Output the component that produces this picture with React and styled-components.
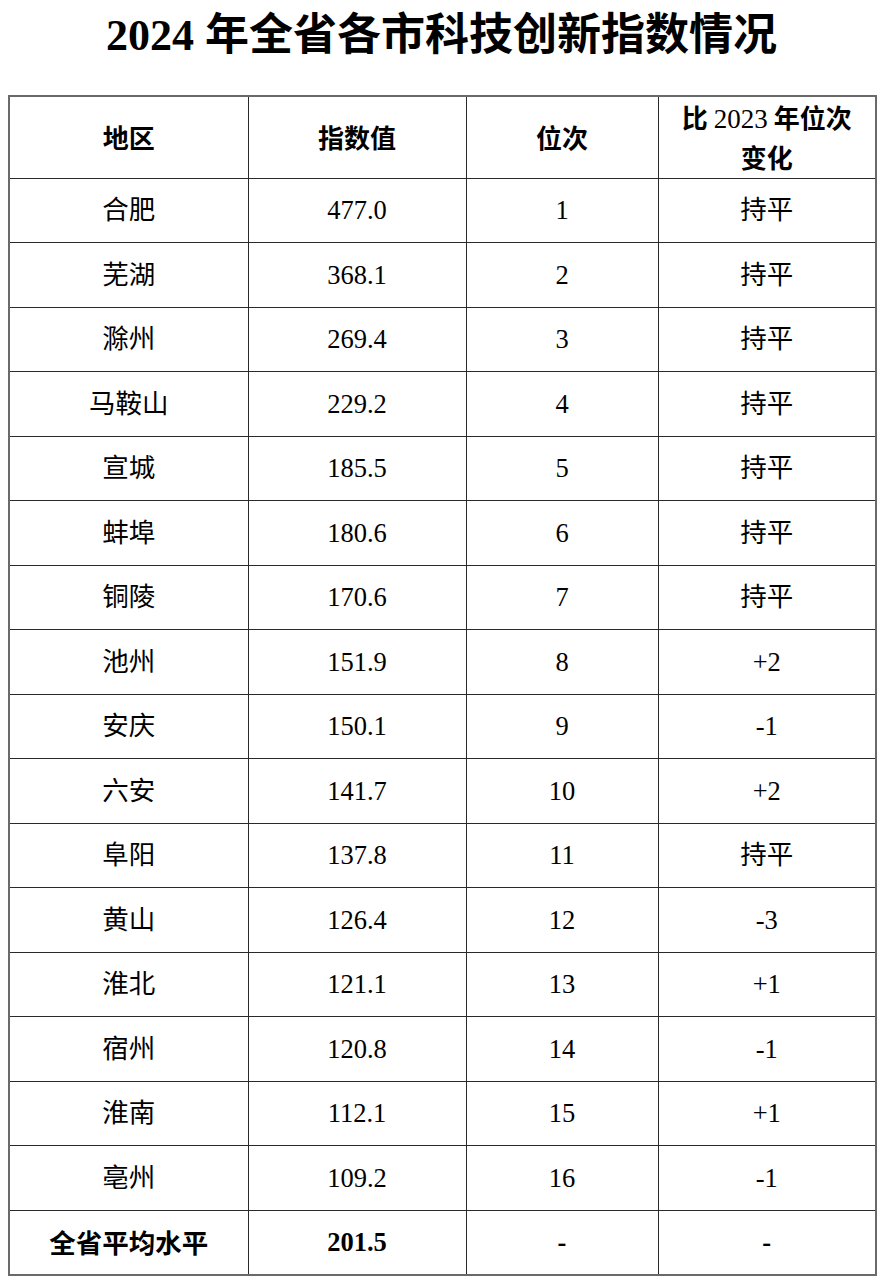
import React from "react";
import styled, { createGlobalStyle } from "styled-components";

const Global = createGlobalStyle`
  html, body { margin: 0; padding: 0; background: #fff; }
  body { font-family: "Liberation Serif", "Noto Sans CJK SC", serif; color: #000; }
`;

const Page = styled.div`
  width: 884px;
  padding: 0 9px 0 8px;
  box-sizing: border-box;
`;

const Title = styled.h1`
  margin: 0;
  height: 95px;
  box-sizing: border-box;
  padding-top: 8px;
  text-align: center;
  font-family: "Liberation Serif", "Noto Sans CJK SC", serif;
  font-weight: 700;
  font-size: 44px;
  line-height: 56px;
`;

const Table = styled.table`
  width: 867px;
  border-collapse: collapse;
  table-layout: fixed;
  border: 2px solid #6a6a6a;
`;

const Col = styled.col`
  width: ${(p) => p.$w}px;
`;

const HeadRow = styled.tr`
  height: 82px;
`;

const Row = styled.tr`
  height: 64.5px;
`;

const Th = styled.th`
  border: 1px solid #2a2a2a;
  padding: 0 2px;
  text-align: center;
  vertical-align: middle;
  font-family: "Noto Sans CJK SC", "Liberation Sans", sans-serif;
  font-weight: 700;
  font-size: 26px;
  line-height: 38px;
`;

const HeadNum = styled.span`
  font-family: "Liberation Serif", "Noto Sans CJK SC", serif;
  font-weight: 400;
  font-size: 27px;
`;

const Td = styled.td`
  border: 1px solid #2a2a2a;
  padding: 0;
  text-align: center;
  vertical-align: middle;
  font-family: ${(p) =>
    p.$bold && p.$cjk
      ? `"Noto Sans CJK SC", "Liberation Sans", sans-serif`
      : `"Liberation Serif", "Noto Sans CJK SC", serif`};
  font-weight: ${(p) => (p.$bold ? 700 : 400)};
  font-size: 26.5px;
  line-height: 30px;
`;

const rows = [
  ["合肥", "477.0", "1", "持平"],
  ["芜湖", "368.1", "2", "持平"],
  ["滁州", "269.4", "3", "持平"],
  ["马鞍山", "229.2", "4", "持平"],
  ["宣城", "185.5", "5", "持平"],
  ["蚌埠", "180.6", "6", "持平"],
  ["铜陵", "170.6", "7", "持平"],
  ["池州", "151.9", "8", "+2"],
  ["安庆", "150.1", "9", "-1"],
  ["六安", "141.7", "10", "+2"],
  ["阜阳", "137.8", "11", "持平"],
  ["黄山", "126.4", "12", "-3"],
  ["淮北", "121.1", "13", "+1"],
  ["宿州", "120.8", "14", "-1"],
  ["淮南", "112.1", "15", "+1"],
  ["亳州", "109.2", "16", "-1"],
];

export default function App() {
  return (
    <Page>
      <Global />
      <Title>2024 年全省各市科技创新指数情况</Title>
      <Table>
        <colgroup>
          <Col $w={239} />
          <Col $w={218} />
          <Col $w={192} />
          <Col $w={218} />
        </colgroup>
        <thead>
          <HeadRow>
            <Th>地区</Th>
            <Th>指数值</Th>
            <Th>位次</Th>
            <Th>
              比 <HeadNum>2023</HeadNum> 年位次
              <br />
              变化
            </Th>
          </HeadRow>
        </thead>
        <tbody>
          {rows.map((r) => (
            <Row key={r[0]}>
              <Td>{r[0]}</Td>
              <Td>{r[1]}</Td>
              <Td>{r[2]}</Td>
              <Td>{r[3]}</Td>
            </Row>
          ))}
          <Row>
            <Td $bold $cjk>全省平均水平</Td>
            <Td $bold>201.5</Td>
            <Td $bold>-</Td>
            <Td $bold>-</Td>
          </Row>
        </tbody>
      </Table>
    </Page>
  );
}
